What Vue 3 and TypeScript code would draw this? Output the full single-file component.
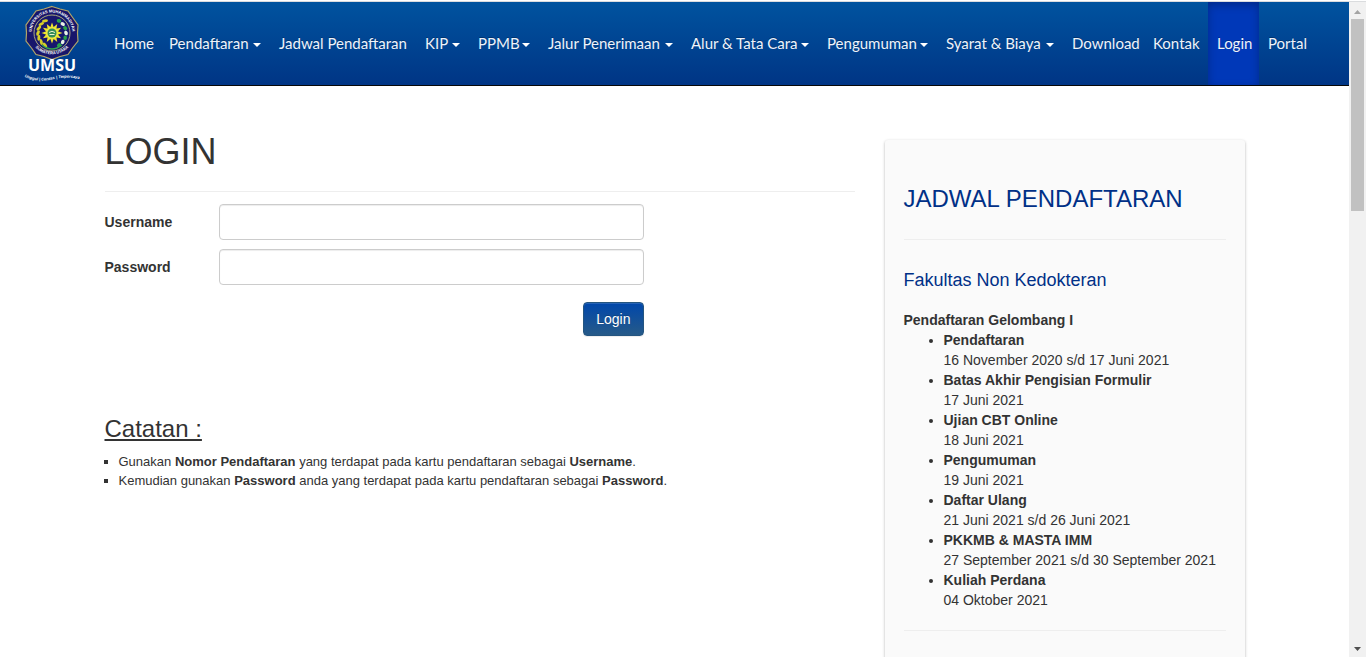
<script setup lang="ts">
import { ref } from 'vue'

interface NavItem { label: string; menu?: boolean; active?: boolean }
interface Schedule { name: string; date: string }

const nav: NavItem[] = [
  { label: 'Home' },
  { label: 'Pendaftaran', menu: true },
  { label: 'Jadwal Pendaftaran' },
  { label: 'KIP', menu: true },
  { label: 'PPMB', menu: true },
  { label: 'Jalur Penerimaan', menu: true },
  { label: 'Alur & Tata Cara', menu: true },
  { label: 'Pengumuman', menu: true },
  { label: 'Syarat & Biaya', menu: true },
  { label: 'Download' },
  { label: 'Kontak' },
  { label: 'Login', active: true },
  { label: 'Portal' },
]

const schedules: Schedule[] = [
  { name: 'Pendaftaran', date: '16 November 2020 s/d 17 Juni 2021' },
  { name: 'Batas Akhir Pengisian Formulir', date: '17 Juni 2021' },
  { name: 'Ujian CBT Online', date: '18 Juni 2021' },
  { name: 'Pengumuman', date: '19 Juni 2021' },
  { name: 'Daftar Ulang', date: '21 Juni 2021 s/d 26 Juni 2021' },
  { name: 'PKKMB & MASTA IMM', date: '27 September 2021 s/d 30 September 2021' },
  { name: 'Kuliah Perdana', date: '04 Oktober 2021' },
]

const rays = Array.from({ length: 12 }, (_, i) => i * 30)
const leaves = [-60, -40, -20, 0, 20, 40, 60]
const username = ref('')
const password = ref('')
</script>

<template>
  <div class="window">
    <div class="page">
      <header class="navbar">
        <a class="brand" href="#" aria-label="UMSU">
          <svg width="56" height="80" viewBox="0 0 56 80">
            <defs>
              <path id="ring-top" d="M8.200 36.300A20.500 20.500 0 1 1 47.800 36.300" />
              <path id="ring-bottom" d="M7 39.500A23.600 23.600 0 0 0 49 39.500" />
              <path id="motto" d="M1 75Q12 80 26 78Q42 74 55 77" />
            </defs>
            <path d="M28 4.500L36 7L44 9L49 16L54 23L53.500 31L54 39L48.500 46L44 52.500L36 54.500L28 57.500L20 54.500L12 52.500L7.500 46L2 39L2.500 31L2 23L7 16L12 9L20 7Z" fill="#17166b" stroke="#b3a568" stroke-width="1.200" />
            <circle cx="28" cy="31" r="18" fill="#17176d" stroke="#a9a87d" stroke-width="1" />
            <text class="ring" fill="#fff" text-anchor="middle"><textPath href="#ring-top" startOffset="50%">UNIVERSITAS MUHAMMADIYAH</textPath></text>
            <text class="ring" fill="#fff" text-anchor="middle"><textPath href="#ring-bottom" startOffset="50%">SUMATERA UTARA</textPath></text>
            <g v-for="a in leaves" :key="a">
              <ellipse cx="14" cy="31" rx="1.500" ry="3" fill="#d6cf28" :transform="`rotate(${a} 28 31) rotate(25 14 31)`" />
              <ellipse cx="42" cy="31" rx="1.800" ry="2.300" :fill="a % 40 ? '#28a34a' : '#e9f3e5'" :transform="`rotate(${a} 28 31) rotate(-20 42 31)`" />
            </g>
            <path d="M18 43Q28 51 38 43" fill="none" stroke="#36a64c" stroke-width="1.500" />
            <path v-for="r in rays" :key="r" d="M28 20.500L30 26H26Z" fill="#eee52d" :transform="`rotate(${r} 28 31)`" />
            <circle cx="28" cy="31" r="6" fill="#eee841" />
            <circle cx="28" cy="31" r="4.500" fill="#348d59" />
            <path d="M25 30.500Q28 28 31 30.500M25.500 32.500H30.500" fill="none" stroke="#eff3c9" stroke-width="1" />
            <text class="umsu" x="28" y="69" text-anchor="middle" fill="#fff">UMSU</text>
            <text class="motto" fill="#fff" text-anchor="middle"><textPath href="#motto" startOffset="50%">Unggul | Cerdas | Terpercaya</textPath></text>
          </svg>
        </a>
        <nav class="menu">
          <a v-for="item in nav" :key="item.label" href="#" :class="{ active: item.active }">
            <span>{{ item.label }}</span><span v-if="item.menu" class="caret"></span>
          </a>
        </nav>
      </header>

      <div class="container">
        <main>
          <h1>LOGIN</h1>
          <hr />
          <form @submit.prevent>
            <label for="username">Username</label>
            <input id="username" v-model="username" type="text" />
            <label for="password">Password</label>
            <input id="password" v-model="password" type="password" />
            <button type="submit">Login</button>
          </form>
          <section class="notes">
            <h3>Catatan :</h3>
            <ul>
              <li>Gunakan <b>Nomor Pendaftaran</b> yang terdapat pada kartu pendaftaran sebagai <b>Username</b>.</li>
              <li>Kemudian gunakan <b>Password</b> anda yang terdapat pada kartu pendaftaran sebagai <b>Password</b>.</li>
            </ul>
          </section>
        </main>
        <aside>
          <h2>JADWAL PENDAFTARAN</h2>
          <hr />
          <h4>Fakultas Non Kedokteran</h4>
          <b>Pendaftaran Gelombang I</b>
          <ul>
            <li v-for="s in schedules" :key="s.name"><b>{{ s.name }}</b><br />{{ s.date }}</li>
          </ul>
          <hr />
        </aside>
      </div>
    </div>
    <div class="scrollbar" aria-hidden="true">
      <svg width="17" height="17" viewBox="0 0 17 17"><path d="M5 12L8.500 8L12 12Z" fill="#a3a3a3" /></svg>
      <div class="thumb"></div>
      <svg class="down" width="17" height="17" viewBox="0 0 17 17"><path d="M5 7L8.500 11L12 7Z" fill="#505050" /></svg>
    </div>
  </div>
</template>

<style>
body { margin: 0; background: #fff; }
</style>

<style scoped>
* { box-sizing: border-box; }
.window {
  display: flex;
  height: 100vh;
  border-top: 1px solid #fff;
  overflow: hidden;
  font: 14px/20px "Liberation Sans", Arial, sans-serif;
  color: #333;
}
.page { flex: 1; min-width: 0; overflow: hidden; border-top: 1px solid #dadcde; }
.navbar {
  display: flex;
  height: 84px;
  padding-left: 24px;
  background: linear-gradient(#00539f, #003585);
  border-bottom: 1px solid #080808;
}
.brand { width: 81px; flex: none; }
.brand svg { display: block; }
.ring { font: bold 4px "Liberation Sans", sans-serif; }
.umsu { font: bold 16px "Open Sans", sans-serif; }
.motto { font: italic bold 4px "Liberation Sans", sans-serif; }
.menu {
  display: grid;
  grid-template-columns: 55px 110px 146px 53px 70px 143px 136px 119px 126px 81px 64px 51px 57px;
}
.menu a {
  display: flex;
  align-items: center;
  justify-content: space-between;
  padding: 0 9px 2px;
  color: #eef3fa;
  font: 15px/20px Lato, "Liberation Sans", sans-serif;
  text-decoration: none;
  text-shadow: 0 -1px 0 rgba(0, 0, 0, .25);
  white-space: nowrap;
}
.menu a.active { background: #0038b8; box-shadow: inset 0 3px 9px rgba(0, 0, 0, .25); }
.caret {
  margin-top: 4px;
  border: 4px solid transparent;
  border-top-color: #fff;
  border-bottom: 0;
}
.container {
  display: grid;
  grid-template-columns: minmax(0, 750fr) minmax(0, 360fr);
  gap: 30px;
  align-items: start;
  max-width: 1140px;
  margin: 0 auto;
}
h1, h2, h3, h4 { margin: 0; font-weight: normal; }
hr { height: 1px; margin: 0; border: 0; background: #eee; }
main { padding-top: 46px; }
h1 { font-size: 36px; line-height: 40px; }
main hr { margin: 19px 0 12px; }
form {
  display: grid;
  grid-template-columns: 104px minmax(0, 425px);
  column-gap: 10px;
  row-gap: 9px;
  align-items: center;
}
label { font-weight: bold; }
input {
  width: 100%;
  height: 36px;
  padding: 6px 12px;
  border: 1px solid #ccc;
  border-radius: 4px;
  box-shadow: inset 0 1px 1px rgba(0, 0, 0, .075);
  font: inherit;
  color: #555;
}
button {
  grid-column: 2;
  justify-self: end;
  height: 34px;
  margin-top: 8px;
  padding: 0 12px;
  border: 1px solid #245580;
  border-radius: 4px;
  background: linear-gradient(#0047ab, #265a88);
  box-shadow: inset 0 1px 0 rgba(255, 255, 255, .15), 0 1px 1px rgba(0, 0, 0, .075);
  color: #fff;
  font: inherit;
  text-shadow: 0 -1px 0 rgba(0, 0, 0, .2);
}
.notes { margin-top: 80px; }
h3 { font-size: 24px; line-height: 26px; text-decoration: underline; }
.notes ul { margin: 10px 0 0; padding-left: 14px; list-style: square; font-size: 13px; line-height: 19px; }
aside {
  margin-top: 54px;
  padding: 46px 19px 60px;
  border-radius: 3px;
  background: #fafafa;
  box-shadow: 0 1px 3px rgba(0, 0, 0, .3);
}
h2 { font-size: 24px; line-height: 26px; color: #003087; }
aside hr { margin: 27px 0; }
h4 { margin: 30px 0 20px; font-size: 18px; line-height: 20px; color: #003087; }
aside ul { margin: 0; padding-left: 40px; }
aside ul + hr { margin-top: 20px; }
.scrollbar {
  display: flex;
  flex-direction: column;
  flex: none;
  width: 17px;
  background: #f1f1f1;
  border-top: 1px solid #dadcde;
}
.scrollbar svg { display: block; flex: none; }
.thumb { height: 192px; margin: 0 2px; background: #c1c1c1; }
.down { margin-top: auto; }
</style>
